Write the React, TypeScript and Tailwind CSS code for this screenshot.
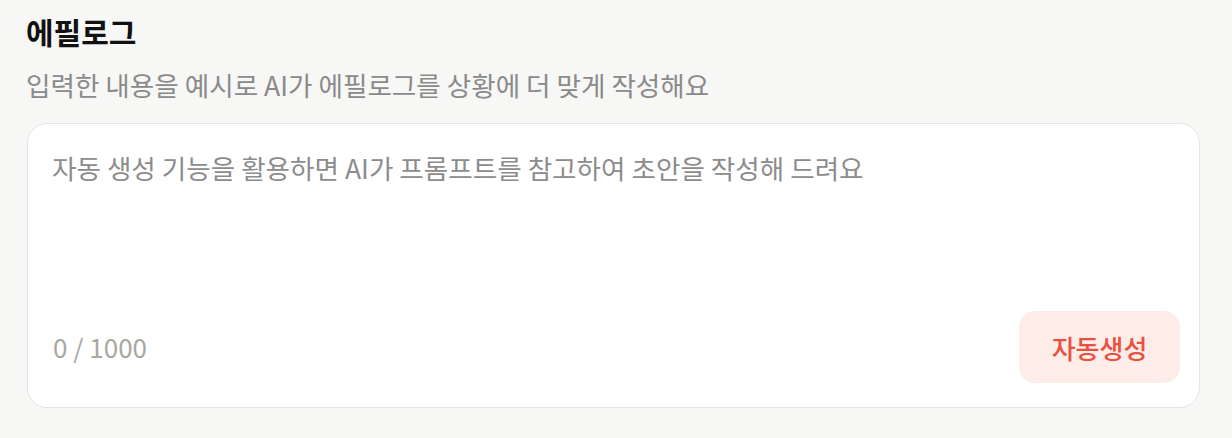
import { useState } from "react";

const MAX_LENGTH = 1000;

export default function App() {
  const [value, setValue] = useState("");

  return (
    <div className="min-h-[438px] w-full bg-[#f7f7f5] pl-[26px] pr-[32px] pt-[11px] font-['Noto_Sans_CJK_KR','Noto_Sans',sans-serif]">
      <h2 className="text-[30px] font-bold leading-[40px] text-[#111111]">에필로그</h2>
      <p className="mt-4 text-[26.6px] leading-[36px] text-[#8a8a8a]">
        입력한 내용을 예시로 AI가 에필로그를 상황에 더 맞게 작성해요
      </p>

      <div className="ml-px mt-5 flex h-[285px] flex-col rounded-[20px] border border-[#e4e4e2] bg-white pb-6 pl-6 pr-[19px] pt-[26px]">
        <textarea
          value={value}
          maxLength={MAX_LENGTH}
          onChange={(e) => setValue(e.target.value)}
          placeholder="자동 생성 기능을 활용하면 AI가 프롬프트를 참고하여 초안을 작성해 드려요"
          className="w-full flex-1 resize-none bg-transparent text-[26.6px] leading-[36px] text-[#222222] outline-none placeholder:text-[#8c8c8c]"
        />
        <div className="flex items-center justify-between">
          <span className="pl-px text-[26px] leading-[36px] text-[#a8a7a0]">
            {value.length} / {MAX_LENGTH}
          </span>
          <button
            type="button"
            className="flex h-[72px] w-[161px] items-center justify-center rounded-[16px] bg-[#feece9] text-[26px] font-medium text-[#e8503f]"
          >
            자동생성
          </button>
        </div>
      </div>
    </div>
  );
}
